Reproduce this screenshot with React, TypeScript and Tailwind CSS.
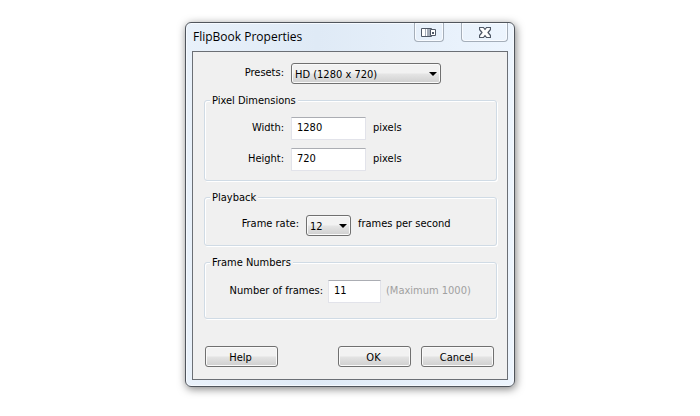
import type { ReactNode } from 'react';
import { clsx } from 'clsx';

interface GroupBoxProps {
  title: string;
  className?: string;
  children: ReactNode;
}

interface FieldLabelProps {
  htmlFor: string;
  className?: string;
  children: ReactNode;
}

interface DropDownProps {
  id: string;
  options: string[];
  value: string;
  className?: string;
}

interface NumberBoxProps {
  id: string;
  value: string;
  className?: string;
}

function GroupBox({ title, className, children }: GroupBoxProps) {
  return (
    <fieldset
      className={clsx(
        'rounded-[3px] border border-[#d0dbe5] shadow-[inset_1px_1px_0_#fff,1px_1px_0_#fff]',
        className
      )}
    >
      <legend className="ml-[5px] h-[14px] bg-[#f0f0f0] px-[2px] leading-[16px]">
        {title}
      </legend>
      {children}
    </fieldset>
  );
}

function FieldLabel({ htmlFor, className, children }: FieldLabelProps) {
  return (
    <label htmlFor={htmlFor} className={clsx('text-right whitespace-nowrap', className)}>
      {children}
    </label>
  );
}

function DropDown({ id, options, value, className }: DropDownProps) {
  return (
    <div className={clsx('relative', className)}>
      <select
        id={id}
        defaultValue={value}
        className="block h-[21px] w-full appearance-none rounded-[3px] border border-[#707070] bg-linear-to-b from-[#f2f2f2] from-45% via-[#e4e4e4] via-55% to-[#cfcfcf] pt-[2px] pl-[3px] shadow-[inset_0_0_0_1px_#fafafa]"
      >
        {options.map((option) => (
          <option key={option}>{option}</option>
        ))}
      </select>
      <svg
        viewBox="0 0 8 4"
        className="pointer-events-none absolute top-[9px] right-1 h-1 w-2"
      >
        <path d="M0 0h8L4 4z" fill="#000" />
      </svg>
    </div>
  );
}

function NumberBox({ id, value, className }: NumberBoxProps) {
  return (
    <input
      id={id}
      type="text"
      defaultValue={value}
      className={clsx(
        'h-[23px] border border-[#e2e3ea] border-t-[#abadb3] bg-white px-[5px] pb-[2px]',
        className
      )}
    />
  );
}

function PushButton({ children }: { children: ReactNode }) {
  return (
    <button
      type="button"
      className="h-[21px] w-[73px] rounded-[3px] border border-[#707070] bg-linear-to-b from-[#f2f2f2] from-45% via-[#e2e2e2] via-55% to-[#cfcfcf] pt-[2px] pr-[2px] text-center shadow-[inset_0_0_0_1px_#fafafa]"
    >
      {children}
    </button>
  );
}

function TitleBar() {
  return (
    <header className="flex h-7 items-start justify-between">
      <h1 className="pt-[5px] pl-[1px] font-['Open_Sans',sans-serif] text-[12px] leading-[18px]">
        FlipBook Properties
      </h1>
      <div className="flex gap-[17px]">
        <button
          type="button"
          aria-label="Dock"
          className="flex h-[19px] w-[30px] justify-center rounded-b-[4px] border border-t-0 border-[#a5aeb9] pt-[5px] shadow-[inset_0_0_0_1px_#f8fbff]"
        >
          <svg viewBox="0 0 16 10" className="h-[10px] w-4">
            <path d="M.5.5h10v8H.5z" fill="#fff" stroke="#4f5866" />
            <path d="M4 1h1v7H4zM6 1h4v7H6z" fill="#a3abb7" />
            <path d="M9.500 1.500h5v6h-5z" fill="#fff" stroke="#4f5866" />
            <path d="M11 4h2v2h-2z" fill="#4f5866" />
          </svg>
        </button>
        <button
          type="button"
          aria-label="Close"
          className="flex h-[19px] w-[47px] justify-center rounded-b-[4px] border border-t-0 border-[#a5aeb9] pt-[4px] shadow-[inset_0_0_0_1px_#f8fbff]"
        >
          <svg viewBox="0 0 12 11" className="h-[11px] w-3">
            <path
              d="M.5.5h4L6 2.500 7.500.5h4v2L9 5.500l2.500 3v2h-4L6 8.500l-1.500 2h-4v-2l2.500-3-2.500-3z"
              fill="#fff"
              stroke="#4f5866"
              strokeWidth="1.200"
              strokeLinejoin="round"
            />
          </svg>
        </button>
      </div>
    </header>
  );
}

export default function App() {
  return (
    <main className="flex min-h-screen items-start justify-center bg-white pt-[22px] font-['DejaVu_Sans_Condensed','DejaVu_Sans',sans-serif] text-[11px] leading-[14px] text-black">
      <section className="w-full max-w-[330px] rounded-[6px] border border-[#50555c] bg-linear-to-r from-[#e9f1fa] via-[#dfeaf6] via-40% to-[#edf5fe] px-[6px] pb-[6px] shadow-[inset_0_0_0_1px_#f6faff,1px_2px_8px_rgba(0,0,0,0.5)]">
        <TitleBar />
        <form className="flex flex-col gap-[9px] border border-[#6b6f75] bg-[#f0f0f0] pt-[11px] pr-[10px] pb-3 pl-[11px]">
          <div className="flex items-start gap-[7px]">
            <FieldLabel htmlFor="presets" className="w-[80px] pt-[3px]">
              Presets:
            </FieldLabel>
            <DropDown
              id="presets"
              options={['HD (1280 x 720)']}
              value="HD (1280 x 720)"
              className="w-[150px]"
            />
          </div>

          <GroupBox title="Pixel Dimensions" className="pt-[10px] pb-[9px]">
            <div className="flex flex-col gap-2">
              <div className="flex items-start gap-[7px]">
                <FieldLabel htmlFor="width" className="w-[79px] pt-[4px]">
                  Width:
                </FieldLabel>
                <NumberBox id="width" value="1280" className="w-[75px]" />
                <span className="pt-[4px]">pixels</span>
              </div>
              <div className="flex items-start gap-[7px]">
                <FieldLabel htmlFor="height" className="w-[79px] pt-[4px]">
                  Height:
                </FieldLabel>
                <NumberBox id="height" value="720" className="w-[75px]" />
                <span className="pt-[4px]">pixels</span>
              </div>
            </div>
          </GroupBox>

          <GroupBox title="Playback" className="pt-[11px] pb-[9px]">
            <div className="flex items-start gap-[7px]">
              <FieldLabel htmlFor="rate" className="w-[94px] pt-[2px]">
                Frame rate:
              </FieldLabel>
              <DropDown id="rate" options={['12', '24', '30']} value="12" className="w-[45px]" />
              <span className="pt-[2px]">frames per second</span>
            </div>
          </GroupBox>

          <GroupBox title="Frame Numbers" className="pt-[11px] pb-[15px]">
            <div className="flex items-start gap-[5px]">
              <FieldLabel htmlFor="frames" className="w-[118px] pt-[4px]">
                Number of frames:
              </FieldLabel>
              <NumberBox id="frames" value="11" className="w-[53px]" />
              <span className="pt-[4px] text-[#a0a0a0]">(Maximum 1000)</span>
            </div>
          </GroupBox>

          <div className="flex justify-between pt-[18px] pr-[3px] pl-[1px]">
            <PushButton>Help</PushButton>
            <div className="flex gap-[10px]">
              <PushButton>OK</PushButton>
              <PushButton>Cancel</PushButton>
            </div>
          </div>
        </form>
      </section>
    </main>
  );
}
